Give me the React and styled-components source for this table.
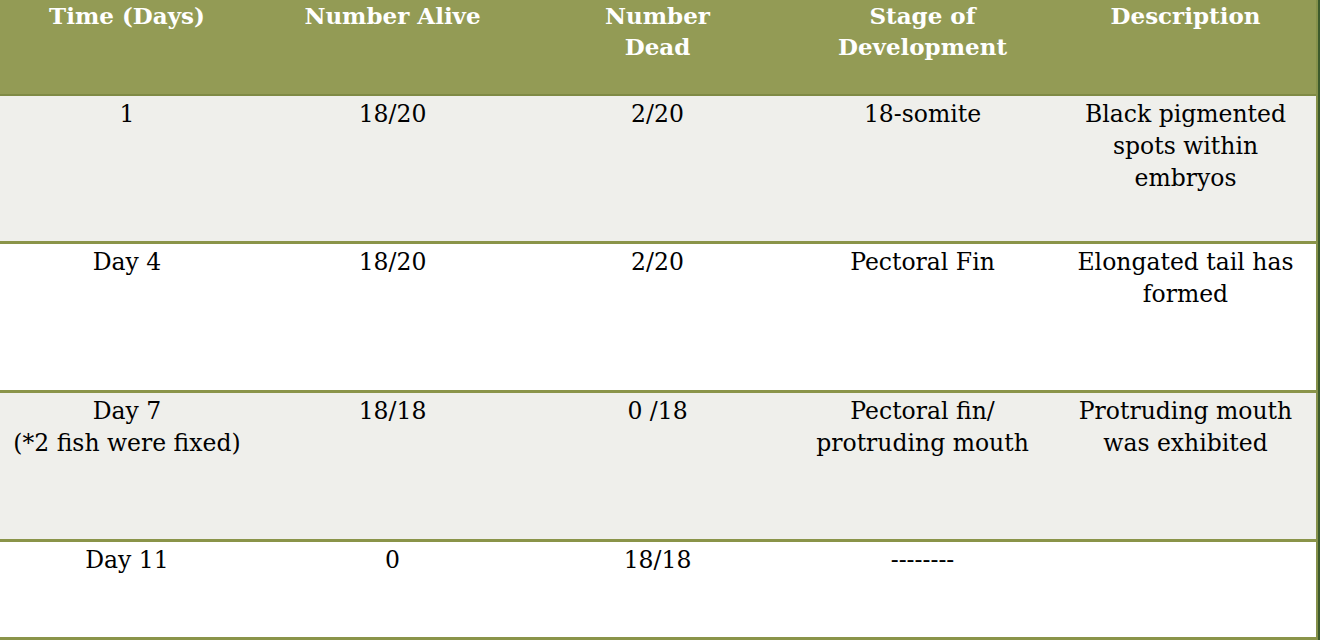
import React from "react";
import styled, { createGlobalStyle } from "styled-components";

const Global = createGlobalStyle`
  html, body { margin: 0; padding: 0; background: #ffffff; }
  body { overflow: hidden; }
`;

const Page = styled.div`
  width: 1320px;
  height: 642px;
  overflow: hidden;
  background: #ffffff;
`;

const Table = styled.div`
  margin-left: -6px;
  width: 1322px;
  border-right: 2px solid #85914a;
  box-shadow: 2px 0 0 #3d5a2c;
  border-bottom: 3px solid #8a9449;
  display: flex;
  flex-direction: column;
`;

const cols = "266px 265px 265px 265px 261px";

const HeaderRow = styled.div`
  display: grid;
  grid-template-columns: ${cols};
  height: 94px;
  background: #939b55;
  border-bottom: 2px solid #7f8a45;
`;

const HeadCell = styled.div`
  font-family: "DejaVu Serif", serif;
  font-weight: bold;
  font-size: 23px;
  line-height: 31px;
  color: #ffffff;
  text-align: center;
  padding-top: 0;
`;

const Row = styled.div`
  display: grid;
  grid-template-columns: ${cols};
  height: ${(p) => p.$h}px;
  background: ${(p) => (p.$shade ? "#efefeb" : "#ffffff")};
  border-top: ${(p) => (p.$first ? "0" : "3px solid #8a9449")};
`;

const Cell = styled.div`
  font-family: "DejaVu Serif", serif;
  font-size: 23.5px;
  line-height: 32px;
  color: #000000;
  text-align: center;
  padding-top: 2px;
`;

const headers = [
  ["Time (Days)"],
  ["Number Alive"],
  ["Number", "Dead"],
  ["Stage of", "Development"],
  ["Description"],
];

const rows = [
  {
    h: 145,
    shade: true,
    cells: [["1"], ["18/20"], ["2/20"], ["18-somite"], ["Black pigmented", "spots within", "embryos"]],
  },
  {
    h: 146,
    shade: false,
    cells: [["Day 4"], ["18/20"], ["2/20"], ["Pectoral Fin"], ["Elongated tail has", "formed"]],
  },
  {
    h: 146,
    shade: true,
    cells: [
      ["Day 7", "(*2 fish were fixed)"],
      ["18/18"],
      ["0 /18"],
      ["Pectoral fin/", "protruding mouth"],
      ["Protruding mouth", "was exhibited"],
    ],
  },
  {
    h: 95,
    shade: false,
    cells: [["Day 11"], ["0"], ["18/18"], ["--------"], [""]],
  },
];

const Lines = ({ lines }) =>
  lines.map((l, i) => (
    <React.Fragment key={i}>
      {i > 0 && <br />}
      {l}
    </React.Fragment>
  ));

export default function App() {
  return (
    <Page>
      <Global />
      <Table>
        <HeaderRow>
          {headers.map((h, i) => (
            <HeadCell key={i}>
              <Lines lines={h} />
            </HeadCell>
          ))}
        </HeaderRow>
        {rows.map((r, i) => (
          <Row key={i} $h={r.h} $shade={r.shade} $first={i === 0}>
            {r.cells.map((c, j) => (
              <Cell key={j}>
                <Lines lines={c} />
              </Cell>
            ))}
          </Row>
        ))}
      </Table>
    </Page>
  );
}
